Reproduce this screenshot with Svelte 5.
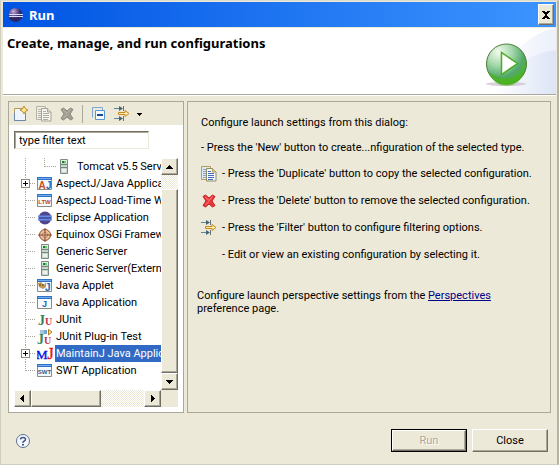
<script>
  const items = [
    { icon: 'server', label: 'Tomcat v5.5 Server', child: true },
    { icon: 'aj', label: 'AspectJ/Java Application', expandable: true },
    { icon: 'ltw', label: 'AspectJ Load-Time Weaving' },
    { icon: 'eclipse', label: 'Eclipse Application' },
    { icon: 'osgi', label: 'Equinox OSGi Framework' },
    { icon: 'server', label: 'Generic Server' },
    { icon: 'server', label: 'Generic Server(External)' },
    { icon: 'applet', label: 'Java Applet' },
    { icon: 'java', label: 'Java Application' },
    { icon: 'junit', label: 'JUnit' },
    { icon: 'plugin', label: 'JUnit Plug-in Test' },
    { icon: 'mj', label: 'MaintainJ Java Application', expandable: true, selected: true },
    { icon: 'swt', label: 'SWT Application', last: true }
  ];
  const hints = [
    { icon: 'copy', text: "- Press the 'Duplicate' button to copy the selected configuration." },
    { icon: 'delete', text: "- Press the 'Delete' button to remove the selected configuration." },
    { icon: 'filter', text: "- Press the 'Filter' button to configure filtering options." },
    { icon: '', text: '- Edit or view an existing configuration by selecting it.' }
  ];
  let filter = $state('type filter text');
</script>

{#snippet frame()}
  <path d="M.5 1.5h14v12H.5z" fill="#f4faff" stroke="#8a8c80" />
  <path d="M0 1h15v3H0z" fill="#2f73c4" /><path d="M1 2h13v1H1z" fill="#72aaf0" />
{/snippet}

{#snippet arrow(d)}
  <svg width="8" height="8" viewBox="0 0 8 8" shape-rendering="crispEdges" aria-hidden="true"><path {d} fill="#000" /></svg>
{/snippet}

{#snippet icon(name)}
  <svg class="icon" width="16" height="16" viewBox="0 0 16 16" aria-hidden="true">
    {#if name === 'new'}
      <path d="M1.5 2.5h8l3 4v8h-11z" fill="#eef5fd" stroke="#b09a58" />
      <path d="M1.5 7v7.5h11V8" fill="none" stroke="#6f87ab" />
      <path d="M11 0l1.5 2.5L15 4l-2.5 1.5L11 8 9.5 5.5 7 4l2.5-1.5z" fill="#f3c443" stroke="#a97a1a" stroke-width=".7" />
      <path d="M11 2v4M9 4h4" stroke="#fff6c0" />
    {:else if name === 'copy' || name === 'copy-off'}
      {@const off = name === 'copy-off'}
      <path d="M.5 .5h9v13h-9z" fill={off ? '#efeee6' : '#dfe8f5'} stroke={off ? '#b5b3a6' : '#b79d55'} />
      <path d="M2 3.5h3M2 5.5h3M2 7.5h3M2 9.5h3M2 11.5h3" stroke={off ? '#b9b7aa' : '#8ba1c8'} />
      <path d="M5.5 2.500h6l3.500 3.500v9H5.500z" fill={off ? '#f5f4ed' : '#f4f8ff'} stroke={off ? '#a5a398' : '#8e8b68'} />
      <path d="M11.500 2.500V6H15" fill={off ? '#dddbd0' : '#e8ce7c'} stroke={off ? '#a5a398' : '#b79d55'} />
      <path d="M7 5.500h3M7 7.500h6M7 9.500h6M7 11.500h6M7 13.500h5" stroke={off ? '#b0aea2' : '#456bb0'} />
    {:else if name === 'delete' || name === 'delete-off'}
      {@const off = name === 'delete-off'}
      <path d="M2 3.500l2.500-1.500L8 5l3.500-3L14 3.500l-3 4.500 3 4.500-2.500 1.500L8 11l-3.500 3L2 12.500 5 8z" fill={off ? '#a19f93' : '#e9383c'} stroke={off ? '#8c8a7e' : '#c32229'} />
      <path d="M4 4l4 3.500 3.500-4M4.500 12L8 8.500" fill="none" stroke={off ? '#bcbab0' : '#ff8781'} />
    {:else if name === 'collapse'}
      <path d="M1.5 11.5v-10h10v3" fill="none" stroke="#79a9d8" />
      <path d="M4.5 4.5h9v9h-9z" fill="#f5faff" stroke="#5f94cc" />
      <path d="M6 9h6" stroke="#164a9c" stroke-width="2" />
    {:else if name === 'filter'}
      <path d="M0 2.5h7M0 12.5h7" stroke="#5d8796" />
      <path d="M5 0l4 2.500L5 5zM5 10l4 2.500L5 15z" fill="#4d6370" />
      <path d="M9.500 0v5M9.500 10v5" stroke="#64777c" />
      <path d="M4.500 6.500h6.500V4.500l4 3-4 3V8.500H4.500z" fill="#ffeba5" stroke="#c28b22" />
    {:else if name === 'server'}
      <path d="M4.5 .5h7v14h-7z" fill="#c9d6cb" stroke="#7c8c84" />
      <path d="M5 1h6v3H5z" fill="#e4ece5" /><path d="M6 2h2v2H6z" fill="#12811f" /><path d="M8 2h2v2H8z" fill="#63d06b" />
      <path d="M5 5.500h6M5 8.500h6" stroke="#73867a" /><path d="M6 10h4v3H6z" fill="#ecf1ec" />
    {:else if name === 'aj'}
      {@render frame()}
      <text x="1.500" y="12.500" font-family="Liberation Sans" font-weight="bold" font-size="10" fill="#c94f18">A</text>
      <text x="9" y="12.500" font-family="Liberation Sans" font-weight="bold" font-size="10" fill="#2469ae">J</text>
    {:else if name === 'ltw' || name === 'swt'}
      {@render frame()}
      <text x="7.500" y="11" text-anchor="middle" font-family="Liberation Sans" font-weight="bold" font-size="6" fill={name === 'ltw' ? '#bd4920' : '#285e8b'}>{name.toUpperCase()}</text>
    {:else if name === 'eclipse'}
      <circle cx="8" cy="8" r="6.500" fill="#51458f" />
      <path d="M1 6.500h14M1 9.500h14" stroke="#668dea" stroke-width="2" /><path d="M2 8h12" stroke="#39458d" />
    {:else if name === 'osgi'}
      <circle cx="8" cy="8" r="5.500" fill="#edc39c" stroke="#8a4d2c" />
      <circle cx="8" cy="8" r="2.500" fill="#fff0dc" stroke="#bb8060" />
      <path d="M8 1v14M1 8h14" stroke="#854629" />
    {:else if name === 'applet'}
      {@render frame()}
      <path d="M1 5l3-1 3 3 2-3v5L6 11 2 9z" fill="#c59755" /><path d="M3 6v2M6 6v2" stroke="#60421d" />
      <text x="8" y="12.500" font-family="Liberation Sans" font-weight="bold" font-size="10" fill="#2469ae">J</text>
    {:else if name === 'java'}
      {@render frame()}
      <text x="5" y="12" font-family="Liberation Sans" font-weight="bold" font-size="9" fill="#2469ae">J</text>
    {:else if name === 'junit'}
      <text x="1" y="13" font-family="Liberation Serif" font-weight="bold" font-size="14" fill="#33845b">J</text>
      <text x="8" y="13" font-family="Liberation Serif" font-weight="bold" font-size="10" fill="#c52f4d">U</text>
    {:else if name === 'plugin'}
      <text x="0" y="15" font-family="Liberation Serif" font-weight="bold" font-size="14" fill="#33845b">J</text>
      <text x="7" y="15" font-family="Liberation Serif" font-weight="bold" font-size="10" fill="#c52f4d">U</text>
      <path d="M3 2h5M3 4h5" stroke="#4f86bb" /><path d="M7 1h3v4H7z" fill="#74a3cf" /><path d="M11.500 .5L15 3l-3.500 3z" fill="#ffe08d" stroke="#b27b1c" />
    {:else if name === 'mj'}
      <text x="-1" y="13" font-family="Liberation Serif" font-size="13" fill="#0714e8" stroke="#0714e8" stroke-width=".4">M<tspan font-size="16" fill="#e81020" stroke="#e81020">J</tspan></text>
    {/if}
  </svg>
{/snippet}

<div class="window">
  <header class="title">
    <svg width="16" height="16" viewBox="0 0 16 16" aria-hidden="true">
      <defs><radialGradient id="orb" cx=".35" cy=".25"><stop stop-color="#c8b1cf" /><stop offset=".55" stop-color="#6c5a9d" /><stop offset="1" stop-color="#302665" /></radialGradient></defs>
      <circle cx="7.500" cy="8" r="7" fill="url(#orb)" /><path d="M1 7.500h14M1 9.500h14" stroke="#d8dff8" />
    </svg>
    <span>Run</span>
    <button class="raised x" aria-label="Close window">
      <svg width="10" height="10" viewBox="0 0 10 10" shape-rendering="crispEdges" aria-hidden="true"><path d="M1 1h3v1h2V1h3v1H8v1H7v1H6v2h1v1h1v1h1v1H6V8H4v1H1V8h1V7h1V6h1V4H3V3H2V2H1z" /></svg>
    </button>
  </header>
  <section class="banner">
    <h1>Create, manage, and run configurations</h1>
    <svg width="84" height="66" viewBox="0 0 84 66" aria-hidden="true">
      <defs>
        <linearGradient id="wash" x1="0" x2="1"><stop stop-color="#fff" /><stop offset="1" stop-color="#dce4f6" /></linearGradient>
        <radialGradient id="green" cx=".3" cy=".2" r=".85"><stop stop-color="#f4fbef" /><stop offset=".4" stop-color="#a5d8ac" /><stop offset=".75" stop-color="#51a86a" /><stop offset="1" stop-color="#4ab61e" /></radialGradient>
      </defs>
      <path d="M20 66Q42 8 84 0v66z" fill="url(#wash)" opacity=".55" />
      <path d="M22 66Q48 25 84 22v44z" fill="url(#wash)" />
      <ellipse cx="34" cy="56" rx="20" ry="2" fill="#c9bfce" opacity=".7" />
      <circle cx="34.500" cy="36" r="20" fill="url(#green)" stroke="#527b35" />
      <path d="M17 44a18 18 0 0 0 35 0q-17 13-35 0" fill="#49b51a" opacity=".7" />
      <path d="M29.500 24.500v22l16-11z" fill="#fff" stroke="#4dad22" stroke-width="1.500" />
    </svg>
  </section>
  <main>
    <section class="left">
      <div class="toolbar">
        <button aria-label="New">{@render icon('new')}</button>
        <button aria-label="Duplicate" disabled>{@render icon('copy-off')}</button>
        <button aria-label="Delete" disabled>{@render icon('delete-off')}</button>
        <i class="sep"></i>
        <button aria-label="Collapse all">{@render icon('collapse')}</button>
        <button class="wide" aria-label="Filter">{@render icon('filter')}{@render arrow('M0 3h5v1H4v1H3v1H2V5H1V4H0z')}</button>
      </div>
      <div class="body">
        <input class="filter" aria-label="Filter configurations" bind:value={filter} />
        <div class="tree">
          <ul>
            {#each items as item}
              <li class:child={item.child}>
                <svg class="lines" width={item.child ? 42 : 22} height="17" viewBox="0 0 {item.child ? 42 : 22} 17" shape-rendering="crispEdges" aria-hidden="true">
                  <path d={item.last ? 'M11.500 0v9' : 'M11.500 0v17'} stroke="#aca899" stroke-dasharray="1 1" />
                  <path d={item.child ? 'M30.500 0v9M31 8.500h11' : 'M12 8.500h10'} stroke="#aca899" stroke-dasharray="1 1" fill="none" />
                  {#if item.expandable}
                    <path d="M7.500 4.500h8v8h-8z" fill="#fff" stroke="#8b8878" /><path d="M9 8.500h5M11.500 6v5" stroke="#000" />
                  {/if}
                </svg>
                {@render icon(item.icon)}
                <span class:selected={item.selected}>{item.label}</span>
              </li>
            {/each}
          </ul>
          <div class="vbar">
            <button class="raised arrow" aria-label="Scroll up">{@render arrow('M3 2h1v1h1v1h1v1h1v1H0V5h1V4h1V3h1z')}</button>
            <div class="raised thumb"></div>
            <button class="raised arrow" aria-label="Scroll down">{@render arrow('M0 2h7v1H6v1H5v1H4v1H3V5H2V4H1V3H0z')}</button>
          </div>
          <div class="hbar">
            <button class="raised arrow" aria-label="Scroll left">{@render arrow('M5 0v7H4V6H3V5H2V4H1V3h1V2h1V1h1V0z')}</button>
            <div class="raised thumb"></div>
            <button class="raised arrow" aria-label="Scroll right">{@render arrow('M2 0v7h1V6h1V5h1V4h1V3H5V2H4V1H3V0z')}</button>
          </div>
        </div>
      </div>
    </section>
    <section class="right">
      <div class="hints">
        <p>Configure launch settings from this dialog:</p>
        <p>- Press the 'New' button to create...nfiguration of the selected type.</p>
        {#each hints as h}
          <div class="hint">{@render icon(h.icon)}<span>{h.text}</span></div>
        {/each}
      </div>
      <p class="note">Configure launch perspective settings from the <a href="#perspectives">Perspectives</a><br />preference page.</p>
    </section>
  </main>
  <footer>
    <button class="help" aria-label="Help">
      <svg width="16" height="16" viewBox="0 0 16 16" aria-hidden="true">
        <circle cx="8" cy="8" r="6.500" fill="#f6f9ff" stroke="#5a7296" />
        <path d="M5.500 6.500Q5.500 4.500 8 4.500T10.500 6.500Q10.500 7.500 9 8.200T8 10" fill="none" stroke="#3c5687" stroke-width="1.500" /><path d="M7 11h2v1.500H7z" fill="#3c5687" />
      </svg>
    </button>
    <span class="default"><button class="raised push" disabled>Run</button></span>
    <button class="raised push">Close</button>
  </footer>
</div>

<style>
  :global(body) { margin: 0; background: #ece9d8; }
  .window { box-sizing: border-box; min-height: 100vh; display: flex; flex-direction: column; background: #ece9d8; border: 1px solid #d0cec0; border-right: 2px solid #b5b3a6; border-top-color: #dedccf; padding: 1px 0 0 1px; font: 11px/13px Roboto, "Liberation Sans", sans-serif; color: #000; }
  button, input { font: inherit; color: inherit; margin: 0; }
  button { padding: 0; border: 0; background: none; }
  svg { display: block; flex: none; }
  p, h1, ul { margin: 0; padding: 0; }
  .raised { box-sizing: border-box; background: #ece9d8; border: 1px solid; border-color: #fff #716f64 #716f64 #fff; box-shadow: inset -1px -1px #aca899; display: flex; align-items: center; justify-content: center; }
  .title { height: 25px; margin: 0 1px; padding: 0 2px 0 5px; display: flex; align-items: center; gap: 5px; background: linear-gradient(90deg, #0054e3, #3c95ff); color: #fff; font: bold 13px/16px "Noto Sans", sans-serif; }
  .title span { flex: 1; }
  .x { width: 16px; height: 21px; color: #000; }
  .banner { height: 66px; margin: 1px 1px 0; background: #fff; border-bottom: 1px solid #aca899; box-shadow: 0 1px #fff; display: flex; justify-content: space-between; }
  h1 { font: bold 13px/16px "Noto Sans", sans-serif; padding: 7px 0 0 4px; white-space: nowrap; }
  main { flex: 1; display: flex; gap: 3px; padding: 6px 6px 0; }
  .left, .right { box-sizing: border-box; border: 1px solid #aca899; }
  .left { width: 176px; flex: none; display: flex; flex-direction: column; }
  .right { flex: 1; min-width: 0; }
  .toolbar { height: 23px; display: flex; align-items: center; padding-left: 4px; gap: 7px; }
  .sep { width: 1px; height: 18px; background: #aca899; margin: 0 1px 0 0; }
  .wide { display: flex; align-items: center; gap: 7px; }
  .body { flex: 1; background: #fff; padding: 6px 5px 4px; }
  .filter { box-sizing: border-box; display: block; width: 135px; height: 18px; padding: 0 4px; border: 1px solid; border-color: #716f64 #ece9d8 #ece9d8 #716f64; border-radius: 0; box-shadow: inset 1px 1px #aca899; background: #fff; outline: 0; }
  .tree { display: grid; grid-template-columns: minmax(0, 1fr) 17px; grid-template-rows: 232px 17px; margin-top: 9px; background: #ece9d8; }
  ul { list-style: none; overflow: hidden; background: #fff; }
  li { display: flex; align-items: center; height: 17px; white-space: nowrap; }
  li .icon { margin: 0 2px 0 1px; }
  li span { padding: 2px 1px; }
  li.child span { padding-left: 3px; }
  li.child .icon { margin-left: 0; }
  .selected { background: #316ac5; color: #fff; }
  .vbar, .hbar { display: flex; background: repeating-conic-gradient(#fff 0 25%, #ece9d8 0 50%) 0 0 / 2px 2px; }
  .vbar { flex-direction: column; }
  .arrow { width: 17px; height: 17px; flex: none; }
  .vbar .thumb { flex: 1; margin-top: 14px; }
  .hbar .thumb { width: 70px; margin-right: auto; }
  .hints { padding: 14px 0 0 13px; display: flex; flex-direction: column; gap: 12px; white-space: nowrap; }
  .hint { display: flex; align-items: center; gap: 5px; height: 15px; }
  .note { padding: 27px 0 0 9px; }
  a { color: #00008b; }
  footer { display: flex; align-items: center; gap: 5px; padding: 16px 9px 12px 13px; }
  .help { margin-right: auto; }
  .push { width: 76px; height: 23px; }
  .default { display: flex; border: 1px solid #000; }
  .default .push { width: 74px; height: 21px; color: #aca899; text-shadow: 1px 1px #fff; }
</style>
